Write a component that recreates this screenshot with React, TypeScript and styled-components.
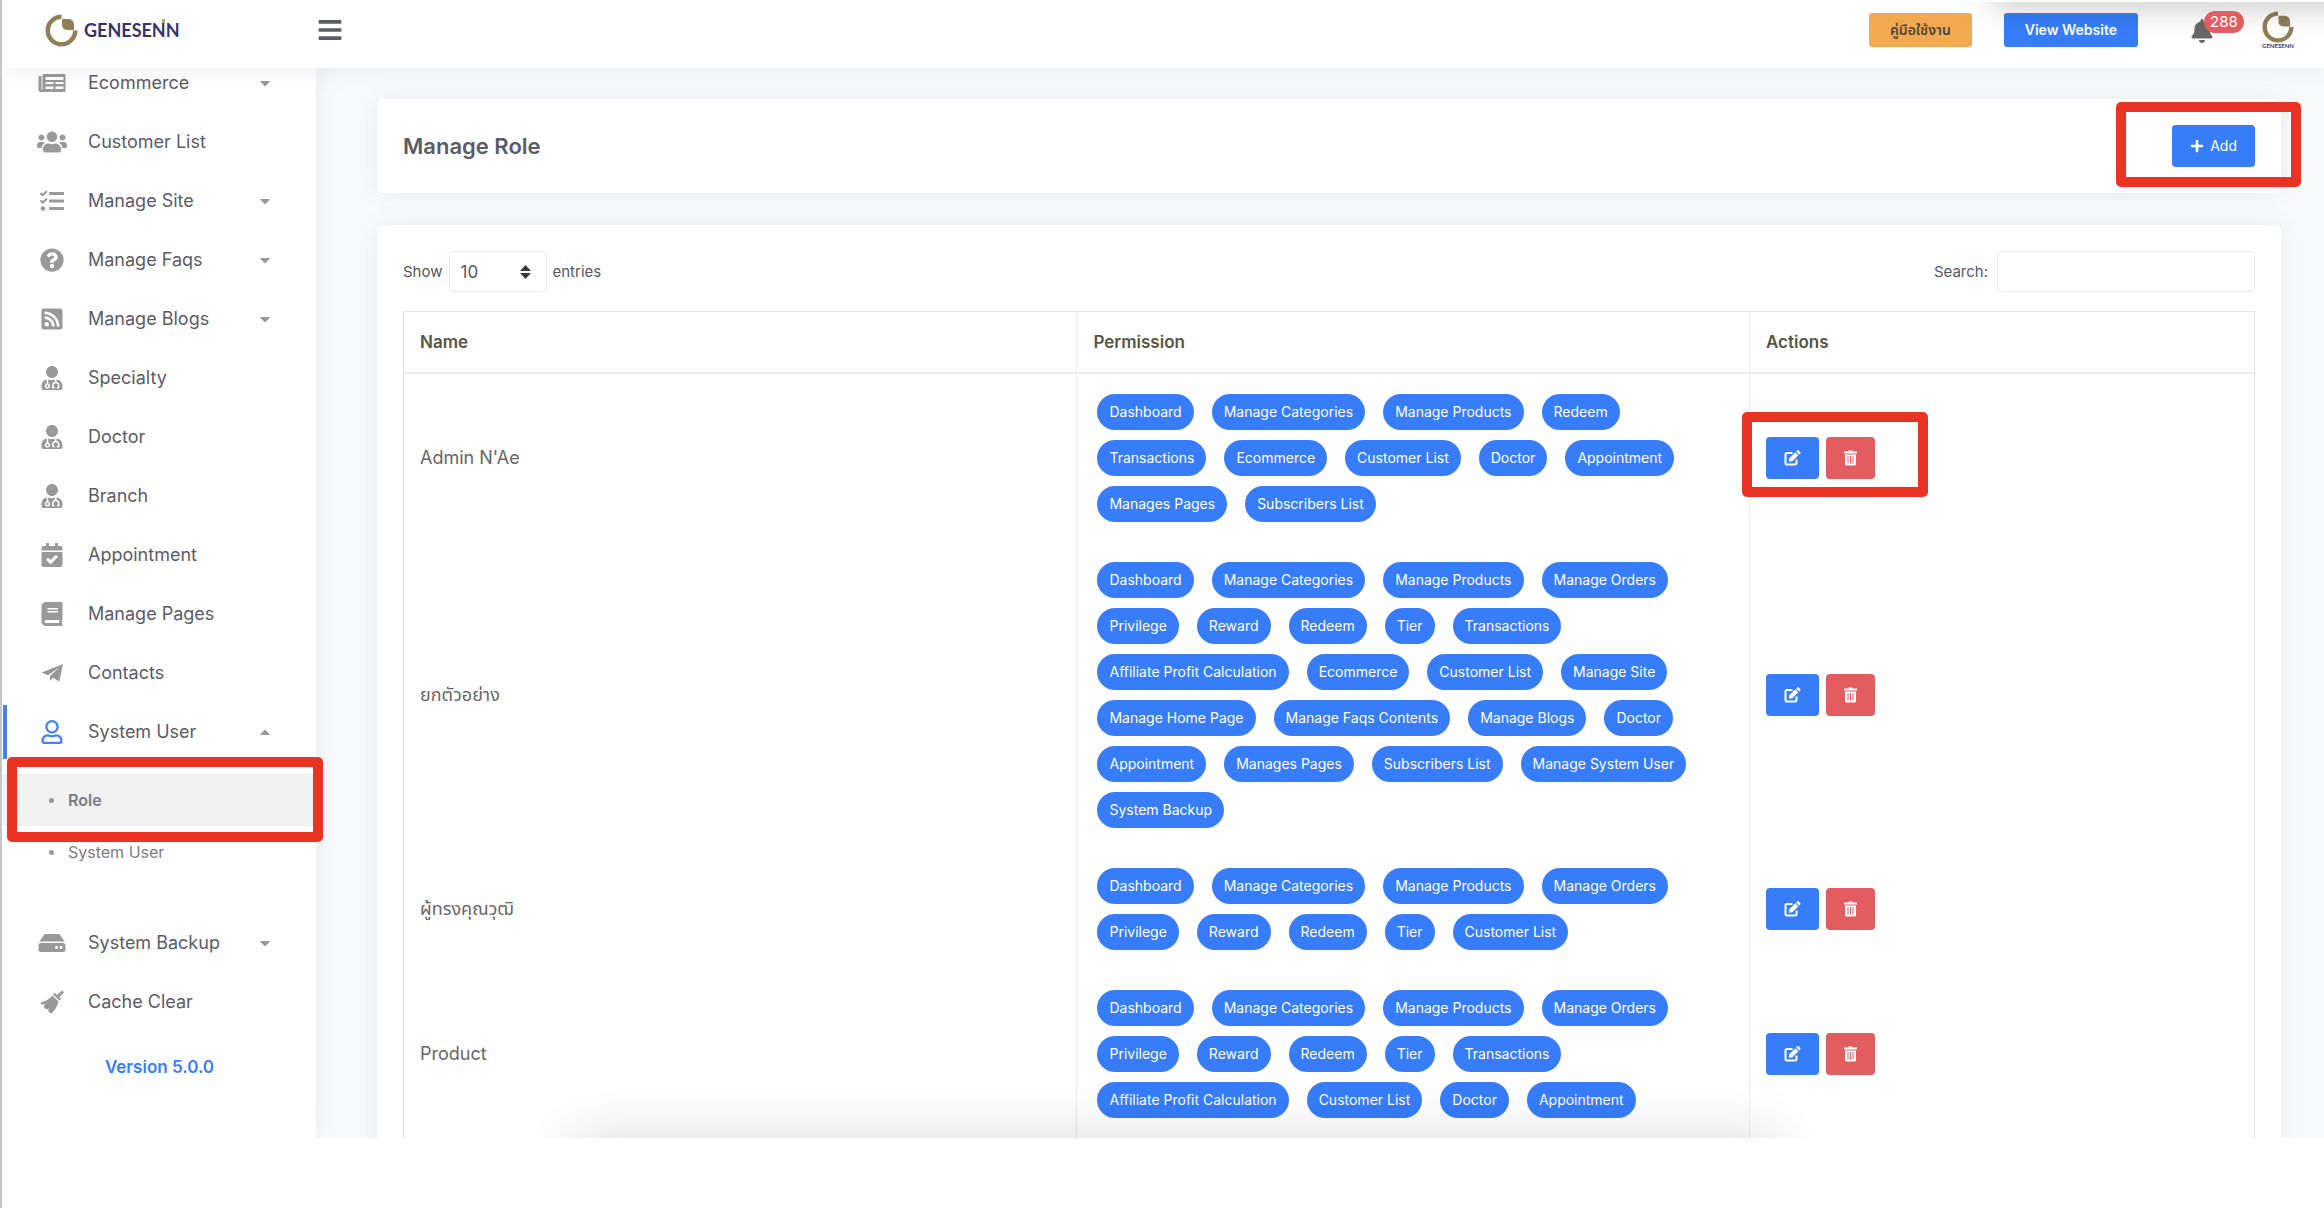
import React from 'react';
import styled, { createGlobalStyle, css } from 'styled-components';
import {
  FaBars,
  FaBell,
  FaBook,
  FaCalendarCheck,
  FaCaretDown,
  FaCaretUp,
  FaHdd,
  FaPlus,
  FaQuestionCircle,
  FaRegUser,
  FaRssSquare,
  FaTasks,
  FaUserMd,
  FaUsers,
} from 'react-icons/fa';

const GlobalStyle = createGlobalStyle`
  * { box-sizing: border-box; }
  body {
    margin: 0;
    background: #fff;
    color: #5b5b66;
    font-family: Inter, "Noto Sans", "Noto Sans Thai", sans-serif;
    font-size: 18px;
    line-height: 24px;
  }
  button, input, select { font: inherit; color: inherit; }
  ul { list-style: none; margin: 0; padding: 0; }
  a { color: inherit; text-decoration: none; }
`;

const Page = styled.div`
  min-height: 100vh;
  padding: 0 0 70px 1px;
  border-left: 2px solid #c6c6c6;
`;

const Shell = styled.div`
  position: relative;
  display: flex;
  flex-direction: column;
  height: calc(100vh - 70px);
  overflow: hidden;
  background: #f9fafc;
`;

const Header = styled.header`
  position: relative;
  z-index: 2;
  display: flex;
  align-items: center;
  flex: none;
  height: 68px;
  padding: 0 30px 8px 42px;
  background: #fff;
  box-shadow: 0 2px 24px rgba(70, 80, 110, 0.1);
`;

const TopGlow = styled.div`
  position: absolute;
  top: 2px;
  right: 0;
  width: 370px;
  height: 34px;
  overflow: hidden;
  pointer-events: none;
  &::before {
    content: '';
    position: absolute;
    left: 40px;
    right: -40px;
    top: -20px;
    height: 20px;
    box-shadow: 0 0 34px rgba(0, 0, 0, 0.35);
  }
`;

const BottomGlow = styled.div`
  position: absolute;
  z-index: 3;
  bottom: 0;
  left: 22%;
  right: 21%;
  height: 60px;
  overflow: hidden;
  pointer-events: none;
  &::before {
    content: '';
    position: absolute;
    left: 60px;
    right: 60px;
    top: 68px;
    height: 30px;
    box-shadow: 0 0 60px rgba(0, 0, 0, 0.25);
  }
`;

const Brand = styled.a`
  display: flex;
  align-items: center;
  gap: 6px;
  width: 272px;
`;

const BrandWord = styled.span`
  position: relative;
  color: #37336c;
  font: 700 18px/24px Lato, sans-serif;
  &::after {
    content: '';
    position: absolute;
    right: 15px;
    top: 1px;
    width: 3px;
    height: 4px;
    background: #b9a878;
  }
`;

const MenuButton = styled.button`
  display: flex;
  padding: 0;
  border: 0;
  background: none;
  font-size: 26px;
  color: #5b5b66;
`;

const HeaderActions = styled.div`
  display: flex;
  align-items: center;
  margin-left: auto;
`;

const HeaderLink = styled.a<{ $tone: 'amber' | 'blue' }>`
  height: 34px;
  margin-right: 32px;
  padding: 0 21px;
  border-radius: 3px;
  font-size: 14px;
  line-height: 34px;
  font-weight: 600;
  ${({ $tone }) =>
    $tone === 'amber'
      ? css`
          background: #f3a94f;
          color: #4d4638;
        `
      : css`
          background: #377dfa;
          color: #fff;
        `}
`;

const BellButton = styled.button`
  position: relative;
  display: flex;
  margin: 2px 48px 0 20px;
  padding: 0;
  border: 0;
  background: none;
  color: #666;
  font-size: 24px;
`;

const BellCount = styled.span`
  position: absolute;
  left: 14px;
  top: -8px;
  padding: 0 6px;
  border-radius: 11px;
  background: #e35d60;
  color: #fff;
  font-size: 15px;
  line-height: 22px;
`;

const Profile = styled.a`
  display: flex;
  flex-direction: column;
  align-items: center;
  color: #37336c;
  font: 700 6px/6px Lato, sans-serif;
`;

const Body = styled.div`
  display: flex;
  flex: 1;
  min-height: 0;
`;

const Sidebar = styled.nav`
  position: relative;
  z-index: 1;
  flex: none;
  width: 313px;
  background: #fff;
  box-shadow: 0 0 24px rgba(70, 80, 110, 0.1);
`;

const Menu = styled.ul`
  margin-top: -12px;
`;

const MenuItem = styled.li`
  padding-bottom: 5px;
`;

const MenuLink = styled.a<{ $active?: boolean }>`
  display: flex;
  align-items: center;
  height: 54px;
  padding: 0 43px 0 30px;
  border-left: 4px solid ${({ $active }) => ($active ? '#4680f8' : 'transparent')};
  > svg:first-child {
    width: 30px;
    margin-right: 21px;
    font-size: 24px;
    color: ${({ $active }) => ($active ? '#4680f8' : '#999')};
  }
  > svg:last-child {
    margin-left: auto;
    font-size: 16px;
    color: #999;
  }
`;

const SubMenu = styled.ul`
  padding: 15px 0 33px;
`;

const SubItem = styled.a<{ $active?: boolean }>`
  display: flex;
  align-items: center;
  height: 52px;
  padding-left: 46px;
  gap: 14px;
  background: ${({ $active }) => ($active ? '#f1f1f1' : 'transparent')};
  color: #7b7b85;
  font-size: 16px;
  font-weight: ${({ $active }) => ($active ? 600 : 400)};
  &::before {
    content: '';
    width: 5px;
    height: 5px;
    border-radius: 50%;
    background: #999;
  }
`;

const Marked = styled.div<{ $inset: string; $fit?: boolean }>`
  position: relative;
  width: ${({ $fit }) => ($fit ? 'max-content' : 'auto')};
  &::after {
    content: '';
    position: absolute;
    z-index: 1;
    inset: ${({ $inset }) => $inset};
    border: 10px solid #ea3323;
    border-radius: 5px;
    pointer-events: none;
  }
`;

const Version = styled.p`
  margin: 21px 0 0;
  text-align: center;
  color: #377dfa;
  font-size: 17px;
  font-weight: 600;
`;

const Main = styled.main`
  flex: 1;
  min-width: 0;
  padding: 31px 43px 0 61px;
`;

const Card = styled.section`
  margin-bottom: 32px;
  padding: 26px;
  border-radius: 6px;
  background: #fff;
  box-shadow: 0 0 24px rgba(70, 80, 110, 0.1);
`;

const TitleCard = styled(Card)`
  display: flex;
  align-items: center;
  justify-content: space-between;
`;

const Title = styled.h1`
  margin: 0;
  font-size: 22px;
  line-height: 32px;
  font-weight: 600;
`;

const Button = styled.button<{ $tone?: 'blue' | 'red' }>`
  display: flex;
  align-items: center;
  gap: 6px;
  height: 42px;
  padding: 0 18px;
  border: 0;
  border-radius: 4px;
  background: ${({ $tone }) => ($tone === 'red' ? '#e35d60' : '#377dfa')};
  color: #fff;
  font-size: 14px;
`;

const Toolbar = styled.div`
  display: flex;
  justify-content: space-between;
  margin-bottom: 19px;
  color: #54575f;
  font-size: 15px;
`;

const Field = styled.label`
  display: flex;
  align-items: center;
  gap: 6px;
`;

const SelectBox = styled.span`
  display: grid;
  align-items: center;
  > * { grid-area: 1 / 1; }
  > svg { justify-self: end; margin-right: 16px; pointer-events: none; }
`;

const Select = styled.select`
  appearance: none;
  width: 98px;
  height: 41px;
  padding: 0 11px;
  border: 1px solid #e9eaf2;
  border-radius: 5px;
  background: #fff;
  font-size: 17px;
`;

const SearchInput = styled.input`
  width: 258px;
  height: 41px;
  margin-left: 3px;
  border: 1px solid #e9eaf2;
  border-radius: 5px;
  background: #fff;
`;

const Table = styled.table`
  width: 100%;
  table-layout: fixed;
  border-collapse: separate;
  border-spacing: 0;
  border: solid #e3e4e8;
  border-width: 1px 1px 0;
`;

const HeadCell = styled.th<{ $width?: string }>`
  width: ${({ $width }) => $width ?? 'auto'};
  height: 62px;
  padding: 0 16px;
  border-bottom: 2px solid #ececf2;
  text-align: left;
  color: #54573f;
  font-size: 17px;
  font-weight: 600;
  & + & { border-left: 1px solid #ececf2; }
`;

const Cell = styled.td`
  padding: 20px 16px;
  color: #666;
  & + & { border-left: 1px solid #ececf2; }
`;

const Pills = styled.ul`
  display: flex;
  flex-wrap: wrap;
  gap: 10px 18px;
  padding: 0 4px;
`;

const Pill = styled.li`
  padding: 0 12px;
  border-radius: 18px;
  background: #377dfa;
  color: #fff;
  font-size: 14px;
  line-height: 36px;
`;

const RowActions = styled.div`
  display: flex;
  gap: 7px;
`;

const Emblem = ({ size }: { size: number }) => (
  <svg width={size} height={size} viewBox="0 0 33 33" aria-hidden="true">
    <path d="M16.500 0.500A16 16 0 1 0 32.500 16.500H28A11.500 11.500 0 1 1 16.500 5Z" fill="#8f8058" />
    <path d="M17 5H24Q29 6 29 11V16H22Q17 15.500 17 10.500Z" fill="#8f8058" />
  </svg>
);

const NewsIcon = () => (
  <svg height="1em" viewBox="0 0 27 24" fill="currentColor" aria-hidden="true">
    <path d="M5 3H26Q27 3 27 4V20Q27 21 26 21H2Q0 21 0 19V6Q0 5 1 5H3V18.500H4V4Q4 3 5 3ZM7 6V9H25V6ZM7 11V13H15V11ZM17 11V13H25V11ZM7 15.500V18H15V15.500ZM17 15.500V18H25V15.500Z" fillRule="evenodd" />
  </svg>
);

const PlaneIcon = () => (
  <svg height="1em" viewBox="0 0 22 24" fill="currentColor" aria-hidden="true">
    <path d="M22 3L0.500 11.500L7 14.200L18 6.500L9 15V17.500L11.500 16.500L18.300 20.500Z" />
    <path d="M9 15.500L12 17L9 19.800Z" />
  </svg>
);

const BrushIcon = () => (
  <svg height="1em" viewBox="0 0 24 24" fill="currentColor" aria-hidden="true">
    <path d="M22 0.500L24 2.500L19.300 7.300L21.300 9L19.600 10.600L13 4.500L14.600 2.800L17 5Z" />
    <path d="M12.300 5.500L18.600 11.500Q16.500 19 11.300 23.800L8 21L9 18.500L6 19.500L3.500 16.500L5.500 14L1.500 14.800L0.500 12.500Q8 11 12.300 5.500Z" />
  </svg>
);

const EditIcon = () => (
  <svg width="17" height="16" viewBox="0 0 17 16" fill="none" aria-hidden="true">
    <path d="M8.500 3H3Q1.500 3 1.500 4.500V13Q1.500 14.500 3 14.500H11Q12.500 14.500 12.500 13V9.500" stroke="#fff" strokeWidth="2" />
    <path d="M4.800 11.800L5.300 8.300L11.300 2.200L14.400 5.200L8.300 11.200Z" fill="#fff" />
    <path d="M12.100 1.400L13.200 0.400Q14 -0.200 14.800 0.500L16.200 1.900Q16.900 2.700 16.200 3.400L15.200 4.400Z" fill="#fff" />
  </svg>
);

const BinIcon = () => (
  <svg width="13" height="16" viewBox="0 0 13 16" aria-hidden="true">
    <path d="M4.500 0.500H8.500V1.500H13V3.500H0V1.500H4.500Z" fill="#fff" />
    <path d="M1 4.500H12V14Q12 15.500 10.500 15.500H2.500Q1 15.500 1 14Z" fill="#fff" />
    <path d="M4 6V13.500M6.500 6V13.500M9 6V13.500" stroke="#e35d60" strokeWidth="1" />
  </svg>
);

const Sorter = () => (
  <svg width="11" height="14" viewBox="0 0 11 14" fill="#343a40" aria-hidden="true">
    <path d="M5.500 0L11 6H0ZM5.500 14L0 8H11Z" />
  </svg>
);

type Entry = { label: string; icon: React.ComponentType; expandable?: boolean };

const upperMenu: Entry[] = [
  { label: 'Ecommerce', icon: NewsIcon, expandable: true },
  { label: 'Customer List', icon: FaUsers },
  { label: 'Manage Site', icon: FaTasks, expandable: true },
  { label: 'Manage Faqs', icon: FaQuestionCircle, expandable: true },
  { label: 'Manage Blogs', icon: FaRssSquare, expandable: true },
  { label: 'Specialty', icon: FaUserMd },
  { label: 'Doctor', icon: FaUserMd },
  { label: 'Branch', icon: FaUserMd },
  { label: 'Appointment', icon: FaCalendarCheck },
  { label: 'Manage Pages', icon: FaBook },
  { label: 'Contacts', icon: PlaneIcon },
];

const lowerMenu: Entry[] = [
  { label: 'System Backup', icon: FaHdd, expandable: true },
  { label: 'Cache Clear', icon: BrushIcon },
];

const roles = [
  {
    name: "Admin N'Ae",
    marked: true,
    permissions: ['Dashboard', 'Manage Categories', 'Manage Products', 'Redeem', 'Transactions', 'Ecommerce', 'Customer List', 'Doctor', 'Appointment', 'Manages Pages', 'Subscribers List'],
  },
  {
    name: 'ยกตัวอย่าง',
    permissions: ['Dashboard', 'Manage Categories', 'Manage Products', 'Manage Orders', 'Privilege', 'Reward', 'Redeem', 'Tier', 'Transactions', 'Affiliate Profit Calculation', 'Ecommerce', 'Customer List', 'Manage Site', 'Manage Home Page', 'Manage Faqs Contents', 'Manage Blogs', 'Doctor', 'Appointment', 'Manages Pages', 'Subscribers List', 'Manage System User', 'System Backup'],
  },
  {
    name: 'ผู้ทรงคุณวุฒิ',
    permissions: ['Dashboard', 'Manage Categories', 'Manage Products', 'Manage Orders', 'Privilege', 'Reward', 'Redeem', 'Tier', 'Customer List'],
  },
  {
    name: 'Product',
    permissions: ['Dashboard', 'Manage Categories', 'Manage Products', 'Manage Orders', 'Privilege', 'Reward', 'Redeem', 'Tier', 'Transactions', 'Affiliate Profit Calculation', 'Customer List', 'Doctor', 'Appointment'],
  },
];

const MenuEntry = ({ label, icon: Icon, expandable }: Entry) => (
  <MenuItem>
    <MenuLink href="#">
      <Icon />
      <span>{label}</span>
      {expandable && <FaCaretDown />}
    </MenuLink>
  </MenuItem>
);

const ActionButtons = () => (
  <RowActions>
    <Button aria-label="Edit"><EditIcon /></Button>
    <Button $tone="red" aria-label="Delete"><BinIcon /></Button>
  </RowActions>
);

export default function App() {
  return (
    <Page>
      <GlobalStyle />
      <Shell>
        <Header>
          <TopGlow />
          <Brand href="#">
            <Emblem size={33} />
            <BrandWord>GENESENN</BrandWord>
          </Brand>
          <MenuButton aria-label="Toggle menu"><FaBars /></MenuButton>
          <HeaderActions>
            <HeaderLink href="#" $tone="amber">คู่มือใช้งาน</HeaderLink>
            <HeaderLink href="#" $tone="blue">View Website</HeaderLink>
            <BellButton aria-label="Notifications">
              <FaBell />
              <BellCount>288</BellCount>
            </BellButton>
            <Profile href="#">
              <Emblem size={32} />
              <span>GENESENN</span>
            </Profile>
          </HeaderActions>
        </Header>
        <Body>
          <Sidebar>
            <Menu>
              {upperMenu.map((entry) => <MenuEntry key={entry.label} {...entry} />)}
              <MenuItem>
                <MenuLink href="#" $active>
                  <FaRegUser />
                  <span>System User</span>
                  <FaCaretUp />
                </MenuLink>
                <SubMenu>
                  <li>
                    <Marked $inset="-17px -7px -16px 4px">
                      <SubItem href="#" $active>Role</SubItem>
                    </Marked>
                  </li>
                  <li><SubItem href="#">System User</SubItem></li>
                </SubMenu>
              </MenuItem>
              {lowerMenu.map((entry) => <MenuEntry key={entry.label} {...entry} />)}
            </Menu>
            <Version>Version 5.0.0</Version>
          </Sidebar>
          <Main>
            <TitleCard>
              <Title>Manage Role</Title>
              <Marked $inset="-23px -46px -20px -56px">
                <Button><FaPlus /> Add</Button>
              </Marked>
            </TitleCard>
            <Card>
              <Toolbar>
                <Field>
                  Show
                  <SelectBox>
                    <Select defaultValue="10">
                      <option>10</option>
                      <option>25</option>
                      <option>50</option>
                    </Select>
                    <Sorter />
                  </SelectBox>
                  entries
                </Field>
                <Field>
                  Search:
                  <SearchInput type="search" />
                </Field>
              </Toolbar>
              <Table>
                <thead>
                  <tr>
                    <HeadCell>Name</HeadCell>
                    <HeadCell>Permission</HeadCell>
                    <HeadCell $width="27.3%">Actions</HeadCell>
                  </tr>
                </thead>
                <tbody>
                  {roles.map((role) => (
                    <tr key={role.name}>
                      <Cell>{role.name}</Cell>
                      <Cell>
                        <Pills>
                          {role.permissions.map((name) => <Pill key={name}>{name}</Pill>)}
                        </Pills>
                      </Cell>
                      <Cell>
                        {role.marked ? (
                          <Marked $fit $inset="-25px -53px -18px -24px">
                            <ActionButtons />
                          </Marked>
                        ) : (
                          <ActionButtons />
                        )}
                      </Cell>
                    </tr>
                  ))}
                </tbody>
              </Table>
            </Card>
          </Main>
        </Body>
        <BottomGlow />
      </Shell>
    </Page>
  );
}
